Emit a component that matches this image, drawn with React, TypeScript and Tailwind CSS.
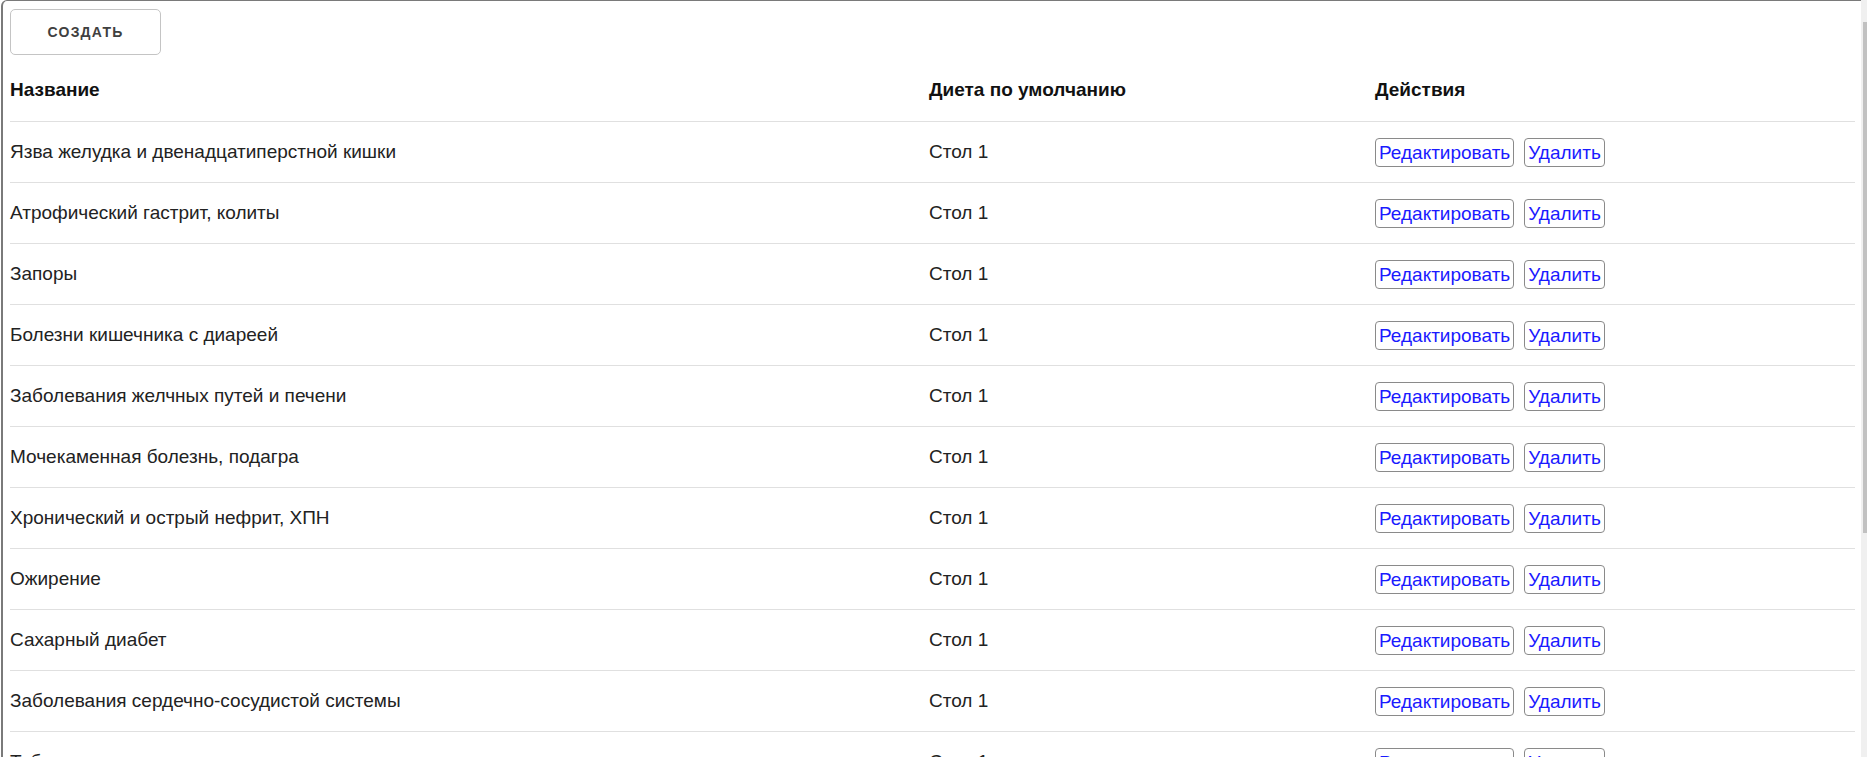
const diseases = [
  "Язва желудка и двенадцатиперстной кишки",
  "Атрофический гастрит, колиты",
  "Запоры",
  "Болезни кишечника с диареей",
  "Заболевания желчных путей и печени",
  "Мочекаменная болезнь, подагра",
  "Хронический и острый нефрит, ХПН",
  "Ожирение",
  "Сахарный диабет",
  "Заболевания сердечно-сосудистой системы",
  "Туберкулез",
  "Функциональные заболевания нервной системы",
  "Острые инфекционные заболевания",
];

function RowButton({ children }: { children: React.ReactNode }) {
  return (
    <button className="h-[29px] px-[3px] flex items-center rounded-[4px] border border-[#8a8a8a] bg-white text-[19px] text-[#1a1aff] leading-none">
      {children}
    </button>
  );
}

export default function App() {
  return (
    <div className="h-screen w-full flex overflow-hidden bg-white" style={{ fontFamily: '"Liberation Sans", Arial, sans-serif' }}>
      <div className="flex-1 ml-px border-l-2 border-t border-[#7a7a7a] rounded-tl-[6px] pl-[7px] pr-[6px] overflow-hidden">
        <button className="mt-[8px] w-[151px] h-[46px] rounded-[5px] border border-[#c4c4c4] bg-white text-[14px] font-bold tracking-[1.2px] text-[#404040] uppercase">
          Создать
        </button>

        <div className="mt-[4px] text-[19px] text-[#222]">
          <div className="grid grid-cols-[919px_446px_1fr] h-[63px] items-center border-b border-[#e0e0e0] font-bold text-[#111]">
            <div>Название</div>
            <div>Диета по умолчанию</div>
            <div>Действия</div>
          </div>
          {diseases.map((name) => (
            <div key={name} className="grid grid-cols-[919px_446px_1fr] h-[61px] items-center border-b border-[#e0e0e0]">
              <div>{name}</div>
              <div>Стол 1</div>
              <div className="flex items-center gap-[10px]">
                <RowButton>Редактировать</RowButton>
                <RowButton>Удалить</RowButton>
              </div>
            </div>
          ))}
        </div>
      </div>

      <div className="w-[6px] h-full bg-[#f0f0f0] pl-[2px] pt-[22px]">
        <div className="h-[511px] bg-[#c1c1c1]" />
      </div>
    </div>
  );
}
